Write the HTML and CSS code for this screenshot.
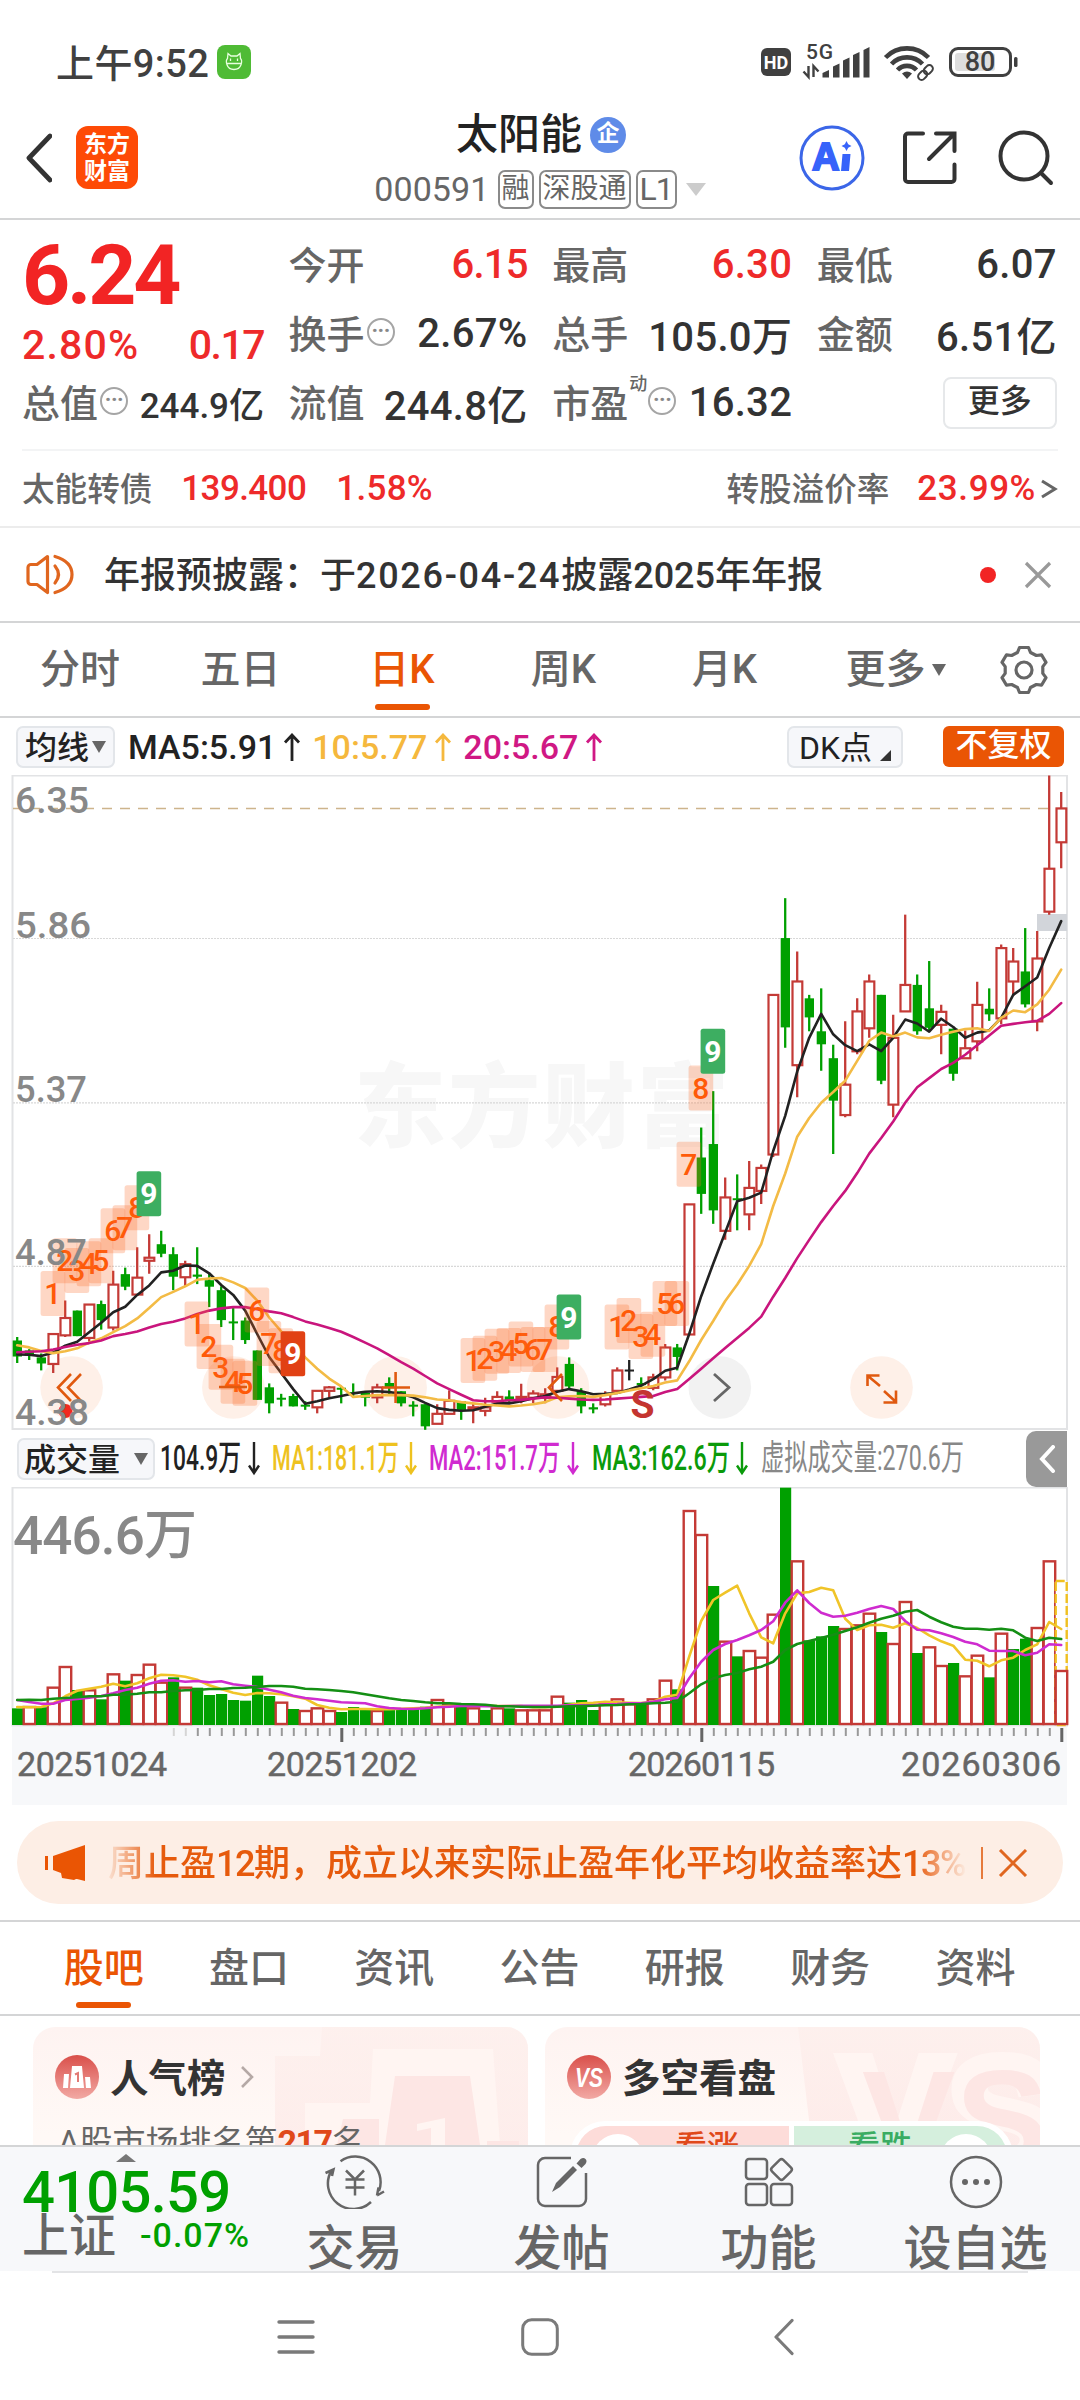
FILE: index.html
```html
<!DOCTYPE html>
<html lang="zh-CN">
<head>
<meta charset="utf-8">
<title>太阳能 000591</title>
<link rel="stylesheet" href="styles.css">
</head>
<body>
<div class="screen">
  <div class="status">
    <span class="clock">上午9:52</span>
    <svg class="app-dot" width="34" height="34" viewBox="0 0 34 34"><rect width="34" height="34" rx="8" fill="#4fbb35"/><g fill="none" stroke="#e9ffe0" stroke-width="1.3"><path d="M10.5 13.5 11 8.500l3 2.500h6l3-2.500.5 5c2 2 1.500 11-6.500 11s-8.500-9-6.500-11zM10 18.500h14"/><path d="M13.500 13.500v2.500M20.500 13.500v2.500"/></g></svg>
    <svg class="signals" width="260" height="50" viewBox="760 38 260 50">
      <rect x="761" y="49" width="30" height="28" rx="6" fill="#404040"/>
      <text x="776" y="69.500" text-anchor="middle" class="t-hd">HD</text>
      <text x="806" y="60" class="t-5g" textLength="27">5G</text>
      <path d="M808.500 67v11l-5-5.500M813.500 78V67l5 5.500" stroke="#404040" stroke-width="2.400" fill="none"/>
      <path d="M822.500 78.500v-4.500l6.500-3v7.500zM833 78.500v-11l6.500-3v14zM843 78.500v-17l6.500-3v20zM853 78.500V56l6.500-3v25.500zM863.500 78.500V51l6-3v30.500z" fill="#404040"/>
      <g fill="none" stroke="#404040" stroke-width="4.600"><path d="M885.500 58.500a30 30 0 0 1 43 0M891.500 65a21.500 21.500 0 0 1 31 0M897.500 71a13 13 0 0 1 19 0"/></g>
      <path d="M902 74.500q5-4 10 0l-5 5.500z" fill="#404040"/>
      <g fill="none" stroke="#fff" stroke-width="5"><path d="M920 79.500l11-11"/></g>
      <g fill="none" stroke="#404040" stroke-width="2" transform="rotate(-45 925.500 73.500)"><rect x="916.500" y="70" width="10" height="7" rx="3.500"/><rect x="924.500" y="70" width="10" height="7" rx="3.500"/></g>
      <rect x="950.500" y="49.500" width="60" height="27" rx="7.500" fill="#fff" stroke="#404040" stroke-width="3"/>
      <rect x="955" y="54" width="40" height="18" rx="3" fill="#dedede"/>
      <rect x="1014" y="58" width="3.500" height="10" rx="1.500" fill="#404040"/>
      <text x="980" y="72" text-anchor="middle" class="t-bat">80</text>
    </svg>
  </div>

  <div class="header">
    <div class="head-left">
      <svg width="28" height="52" viewBox="0 0 28 52"><path d="M26 4 5 26l21 22" fill="none" stroke="#333" stroke-width="4.800" stroke-linecap="round" stroke-linejoin="round"/></svg>
      <div class="logo"><span>东方</span><span>财富</span></div>
    </div>
    <div class="head-mid">
      <div class="name">太阳能<span class="qi">企</span></div>
      <div class="code"><span class="num">000591</span><span class="tag">融</span><span class="tag">深股通</span><span class="tag">L1</span><i class="tri"></i></div>
    </div>
    <div class="head-right">
      <svg width="66" height="66" viewBox="0 0 66 66"><circle cx="33" cy="33" r="31" fill="none" stroke="#3b66e8" stroke-width="3"/><text x="13" y="45" class="t-ai">A</text><path d="M43.500 29h8l-1.500 17h-8zM47.500 16l1.700 3.300 3.300 1.700-3.300 1.700-1.700 3.300-1.700-3.300-3.300-1.700 3.300-1.700z" fill="#3763fa"/></svg>
      <svg width="54" height="54" viewBox="0 0 54 54"><path d="M20 2.500H5a3 3 0 0 0-3 3V48a3 3 0 0 0 3 3h43.500a3 3 0 0 0 3-3V33.500M33 2.500h18.500V20M50.500 3.500 26 28" fill="none" stroke="#333" stroke-width="4" stroke-linecap="round"/></svg>
      <svg width="56" height="56" viewBox="0 0 56 56"><circle cx="26" cy="26" r="23.500" fill="none" stroke="#333" stroke-width="4"/><path d="m43 43 10 10" stroke="#333" stroke-width="4" stroke-linecap="round"/></svg>
    </div>
  </div>

  <div class="quote">
    <div class="now">
      <div class="price">6.24</div>
      <div class="chg"><span class="pct">2.80%</span><span class="diff">0.17</span></div>
    </div>
    <div class="cell"><label>今开</label><b class="up tight">6.15</b></div>
    <div class="cell"><label>最高</label><b class="up">6.30</b></div>
    <div class="cell"><label>最低</label><b>6.07</b></div>
    <div class="cell"><label>换手</label><i class="dots">···</i><b>2.67%</b></div>
    <div class="cell"><label>总手</label><b>105.0万</b></div>
    <div class="cell"><label>金额</label><b>6.51亿</b></div>
    <div class="cell"><label>总值</label><i class="dots">···</i><b class="small">244.9亿</b></div>
    <div class="cell"><label>流值</label><b>244.8亿</b></div>
    <div class="cell"><label>市盈</label><sup>动</sup><i class="dots">···</i><b>16.32</b></div>
    <div class="cell end"><span class="more">更多</span></div>
  </div>
  <div class="bond">
    <span>太能转债</span><b class="b1">139.400</b><b class="b2">1.58%</b>
    <span class="push">转股溢价率</span><b class="b3">23.99%</b>
    <svg width="18" height="22" viewBox="0 0 18 22"><path d="m2 3 13 8-13 8" fill="none" stroke="#666" stroke-width="3"/></svg>
  </div>

  <div class="notice">
    <svg width="48" height="42" viewBox="0 0 48 42"><g fill="none" stroke="#e0661f" stroke-width="3.200" stroke-linejoin="round"><path d="M21.500 2.500 11 10.500H5a3 3 0 0 0-3 3v14a3 3 0 0 0 3 3h6l10.500 8zM29 12q7 8.500 0 17M29 2.500q17 5 17 18t-17 18" stroke-linecap="round"/></g></svg>
    <p>年报预披露：于<em>2026-04-24</em>披露2025年年报</p>
    <i class="dot"></i>
    <svg width="28" height="28" viewBox="0 0 28 28"><path d="m2 2 24 24M26 2 2 26" stroke="#999" stroke-width="3.200"/></svg>
  </div>

  <div class="ktabs">
    <span>分时</span><span>五日</span><span class="on">日K</span><span>周K</span><span>月K</span><span>更多<i class="tri dark"></i></span>
    <svg width="50" height="50" viewBox="-25 -25 50 50"><g fill="none" stroke="#666" stroke-width="3.200" stroke-linejoin="round"><path d="M-4.500-22.500h9L6.500-17.500 12.300-14.500 17.500-15.200 22-7.600 18.800-3.400V3.400L22 7.600 17.500 15.200 12.300 14.500 6.500 17.500 4.500 22.500h-9L-6.500 17.500-12.300 14.500-17.500 15.200-22 7.600-18.800 3.400V-3.400L-22-7.600-17.500-15.200-12.300-14.500-6.500-17.500z"/><circle r="8"/></g></svg>
  </div>

  <div class="malegend">
    <span class="chip"><span>均线</span><i class="tri dark"></i></span>
    <span class="ma k">MA5:5.91<svg width="18" height="28"><use href="#up"/></svg></span>
    <span class="ma y">10:5.77<svg width="18" height="28"><use href="#up"/></svg></span>
    <span class="ma m">20:5.67<svg width="18" height="28"><use href="#up"/></svg></span>
    <span class="chip dk"><span>DK点</span><svg width="11" height="11"><path d="M11 0v11H0z" fill="#333"/></svg></span>
    <span class="fq">不复权</span>
  </div>

  <svg width="0" height="0" class="defs"><defs>
    <path id="up" d="M9 28V2M2 9.500 9 2l7 7.500" fill="none" stroke="currentColor" stroke-width="2.800"/>
    <path id="down" d="M6 0v30M1 23.500 6 31l5-7.500" fill="none" stroke="currentColor" stroke-width="2.400"/>
    <linearGradient id="badge" x1="0" y1="0" x2="0" y2="1"><stop offset="0" stop-color="#d94f4a"/><stop offset="1" stop-color="#f2a9a4"/></linearGradient>
    <linearGradient id="fade" x1="0" y1="0" x2="0" y2="1"><stop offset="0" stop-color="#fdefec"/><stop offset="1" stop-color="#fde8e6"/></linearGradient>
  </defs></svg>

  <svg id="kline" class="panel" width="1080" height="655"></svg>

  <div class="vollegend">
    <span class="chip vol"><span>成交量</span><i class="tri dark"></i></span>
    <svg class="k" width="101" height="42"><text y="32" textLength="81" lengthAdjust="spacingAndGlyphs">104.9万</text><use href="#down" x="88" y="4"/></svg>
    <svg class="y" width="146" height="42"><text y="32" textLength="127" lengthAdjust="spacingAndGlyphs">MA1:181.1万</text><use href="#down" x="133" y="4"/></svg>
    <svg class="m" width="152" height="42"><text y="32" textLength="131" lengthAdjust="spacingAndGlyphs">MA2:151.7万</text><use href="#down" x="138" y="4"/></svg>
    <svg class="g" width="158" height="42"><text y="32" textLength="138" lengthAdjust="spacingAndGlyphs">MA3:162.6万</text><use href="#down" x="144" y="4"/></svg>
    <svg class="n" width="204" height="42"><text y="32" textLength="203" lengthAdjust="spacingAndGlyphs">虚拟成交量:270.6万</text></svg>
    <span class="pull"><svg width="18" height="28"><path d="M15 2 4 14l11 12" fill="none" stroke="#fff" stroke-width="4" stroke-linecap="round"/></svg></span>
  </div>

  <svg id="volume" class="panel" width="1080" height="318"></svg>

  <div class="banner">
    <svg width="42" height="36" viewBox="0 0 42 36"><path d="M1 11h3v14H1zM9 11 41 0v36l-8-2-1 0-2 1-12-2-1-5-8-3z" fill="#ea5504"/></svg>
    <p>周止盈<em>12</em>期，成立以来实际止盈年化平均收益率达<em>13%</em></p>
    <i class="bar"></i>
    <svg width="30" height="28" viewBox="0 0 30 28"><path d="m2 1 26 26M28 1 2 27" stroke="#e0661f" stroke-width="3"/></svg>
  </div>

  <div class="itabs">
    <span class="on">股吧</span><span>盘口</span><span>资讯</span><span>公告</span><span>研报</span><span>财务</span><span>资料</span>
  </div>

  <div class="cards">
    <div class="card">
      <svg class="ghost" width="495" height="118" viewBox="33 2027 495 118"><path d="M322 2027H528v118H275v-89h45z" fill="url(#fade)" opacity=".7"/><path d="M373 2049H493l7 96H305v-42h65z" fill="#fff5f2"/><path d="M395 2076h75l10 69h-95zM343 2119h36v26h-42zM487 2141h32v4h-32z" fill="#fde6e4"/><path d="m417 2124 28-6v27h-14v-17l-14 3z" fill="#fff5f2"/></svg>
      <div class="card-h"><svg width="44" height="44" viewBox="0 0 44 44"><circle cx="22" cy="22" r="22" fill="url(#badge)"/><path d="M9 19h5l-1 14H8zM17 11h10l2 22H15zM30 22h5l1 11h-5z" fill="#fff"/><path d="m20 19.500 3-1.500v9" stroke="#e27a75" stroke-width="2" fill="none"/></svg><h3>人气榜</h3><svg width="14" height="24" viewBox="0 0 14 24"><path d="m2 2 10 10L2 22" fill="none" stroke="#b5a9a6" stroke-width="2.600"/></svg></div>
      <p>A股市场排名第<b>217</b>名</p>
    </div>
    <div class="card">
      <svg class="ghost" width="495" height="118" viewBox="545 2027 495 118"><path d="M798 2027h242v118H812z" fill="url(#fade)" opacity=".8"/><text x="842" y="2170" class="t-vs1">VS</text><text x="862" y="2168" class="t-vs2">VS</text></svg>
      <div class="card-h"><svg width="44" height="44" viewBox="0 0 44 44"><circle cx="22" cy="22" r="22" fill="url(#badge)"/><text x="22" y="32" class="t-vs" text-anchor="middle" textLength="28" lengthAdjust="spacingAndGlyphs">VS</text></svg><h3>多空看盘</h3></div>
      <div class="pill"><span class="bull"><i></i>看涨</span><span class="bear">看跌<i></i></span></div>
    </div>
  </div>

  <div class="dock">
    <div class="index">
      <i class="tri up-tri"></i>
      <div class="pts">4105.59</div>
      <div class="sub"><span>上证</span><b>-0.07%</b></div>
    </div>
    <div class="act"><svg width="60" height="54" viewBox="-30 -27 60 54"><g fill="none" stroke="#666" stroke-width="2.500"><path d="M-14.500-20.800A25.500 25.500 0 0 1 24 9M22 13.500l7-4M22 13.500l1.500-8M16 20A25.500 25.500 0 0 1-23.500-11.500M-29.500-9l8-3.500-1.500 6.500"/><path d="M-9-11.500 0-2.500l9-9M-9.500-2.500h19M-9.500 5.500h19M0-2.500v16"/></g></svg><span>交易</span></div>
    <div class="act"><svg width="60" height="54" viewBox="-30 -27 60 54"><path d="M9-24h-26a7 7 0 0 0-7 7v34a7 7 0 0 0 7 7h34a7 7 0 0 0 7-7V-9" fill="none" stroke="#666" stroke-width="2.500"/><path d="m-10 10 4-9 17-17 4 4-17 17zM14.500-18.500l4-4.500q3-2 5 0t0 5l-4 4z" fill="#666"/></svg><span>发帖</span></div>
    <div class="act"><svg width="60" height="54" viewBox="-30 -27 60 54"><g fill="none" stroke="#666" stroke-width="2.500"><rect x="-23" y="-23" width="21" height="20" rx="3"/><rect x="-23" y="2" width="21" height="21" rx="3"/><rect x="2" y="2" width="21" height="21" rx="3"/><rect x="4.500" y="-20.500" width="16" height="16" rx="2.500" transform="rotate(45 12.500 -12.500)"/></g></svg><span>功能</span></div>
    <div class="act"><svg width="60" height="54" viewBox="-30 -27 60 54"><circle r="25" fill="none" stroke="#666" stroke-width="2.500"/><g fill="#666"><circle cx="-11" r="3"/><circle r="3"/><circle cx="11" r="3"/></g></svg><span>设自选</span></div>
  </div>

  <div class="nav">
    <svg width="38" height="38" viewBox="0 0 38 38"><path d="M2 4h34M2 19h34M2 34h34" stroke="#7a7a7a" stroke-width="3.400" stroke-linecap="round"/></svg>
    <svg width="38" height="38" viewBox="0 0 38 38"><rect x="1.700" y="1.700" width="34.600" height="34.600" rx="9" fill="none" stroke="#7a7a7a" stroke-width="3"/></svg>
    <svg width="20" height="38" viewBox="0 0 20 38"><path d="M18 2.500 2 19l16 16.500" fill="none" stroke="#7a7a7a" stroke-width="3.200" stroke-linecap="round" stroke-linejoin="round"/></svg>
  </div>
</div>
<script src="chart.js"></script>
</body>
</html>
```
FILE: styles.css
```css
* { box-sizing: border-box; margin: 0; padding: 0; }
body {
  width: 1080px;
  background: #fff;
  color: #333;
  font-family: Roboto, "Noto Sans CJK SC", sans-serif;
  font-weight: 500;
}
svg { display: block; flex: none; }
i, em { font-style: normal; }
b { font-weight: 500; }
.screen { width: 1080px; height: 2400px; overflow: hidden; background: #fff; }

.tri { display: inline-block; width: 0; height: 0; border: solid transparent; border-width: 13px 10px 0; border-top-color: #ccc; }
.tri.dark { border-width: 12px 7px 0; border-top-color: #666; }
.up { color: #ee2a2a; }

/* status bar */
.status { height: 110px; display: flex; align-items: center; padding: 14px 60px 0 56px; }
.clock { font-size: 38px; color: #404040; letter-spacing: .4px; width: 161px; white-space: nowrap; margin-top: -3px; }
.signals { margin-left: auto; }
.t-hd { font: 700 18px Roboto; fill: #fff; }
.t-5g { font: 500 21px Roboto; fill: #404040; }
.t-bat { font: 500 27px Roboto; fill: #404040; }

/* title bar */
.header { height: 110px; display: grid; grid-template-columns: 1fr auto 1fr; border-bottom: 2px solid #d4d5d6; }
.head-left { display: flex; align-items: center; padding: 0 0 13px 24px; gap: 24px; }
.logo { width: 62px; height: 63px; border-radius: 12px; background: #fe4a06; color: #fff; display: flex; flex-direction: column; align-items: center; justify-content: center; font-size: 23px; font-weight: 700; line-height: 27px; }
.head-mid { display: flex; flex-direction: column; align-items: center; }
.name { font-size: 42px; line-height: 50px; height: 50px; color: #222; display: flex; align-items: center; margin-left: 2px; }
.qi { width: 36px; height: 36px; border-radius: 50%; background: #5f8be8; color: #fff; font-size: 23px; line-height: 34px; text-align: center; font-weight: 700; margin-left: 8px; }
.code { display: flex; align-items: center; height: 40px; margin-top: 9px; color: #666; font-size: 34px; }
.code .num { font-weight: 400; letter-spacing: .1px; margin-right: 8px; }
.tag { border: 2px solid #8a8a8a; border-radius: 7px; height: 39px; line-height: 34px; padding: 0 2px; font-size: 28px; font-weight: 400; margin-right: 5px; }
.tag:last-of-type { font-size: 32px; letter-spacing: -1px; }
.code .tri { margin-left: 4px; }
.head-right { display: flex; align-items: center; justify-content: flex-end; padding: 0 26px 13px 0; gap: 38px; }
.head-right svg:last-child { margin-left: 3px; }
.t-ai { font: 700 38px "Liberation Sans"; fill: #3763fa; stroke: #3763fa; stroke-width: 2; }

/* quote grid */
.quote { display: grid; grid-template-columns: 242px 239px 240px 240px; column-gap: 24.600px; grid-template-rows: 69px 69px 69px; padding: 10px 21px 0 22px; height: 229px; }
.now { grid-row: 1 / 3; color: #ee2a2a; }
.price { font-size: 84px; font-weight: 700; line-height: 92px; letter-spacing: -3.200px; color: #f22424; }
.chg { display: flex; justify-content: space-between; font-size: 41px; line-height: 46px; }
.pct { letter-spacing: 1.200px; }
.diff { letter-spacing: -1.500px; }
.cell { display: flex; align-items: center; white-space: nowrap; }
.cell label { font-size: 38px; color: #666; margin-top: -4px; }
.cell b { margin-left: auto; font-size: 40px; letter-spacing: .3px; }
.cell .tight { letter-spacing: -.8px; }
.cell .small { font-size: 35px; letter-spacing: 0; }
.cell sup { font-size: 18px; color: #666; align-self: flex-start; line-height: 24px; margin: 4px -1px 0 1px; }
.dots { width: 28px; height: 28px; border: 2px solid #a5a5a5; border-radius: 50%; color: #888; font-size: 22px; line-height: 22px; text-align: center; font-weight: 700; margin: -3px 0 0 2px; letter-spacing: -.5px; }
.end { justify-content: flex-end; }
.more { width: 114px; height: 52px; border: 2px solid #e6e8ea; border-radius: 8px; text-align: center; line-height: 44px; font-size: 32px; }
.bond { height: 77px; margin: 0 22px; border-top: 2px solid #f3f4f5; display: flex; align-items: center; font-size: 32.600px; color: #666; }
.bond span { margin-top: -5px; }
.bond b { font-size: 35px; color: #ee2a2a; margin-top: -1px; }
.bond .b1 { margin-left: 29px; letter-spacing: -.6px; }
.bond .b2 { margin-left: 30px; letter-spacing: .3px; }
.bond .b3 { margin-left: 28px; letter-spacing: .6px; }
.bond .push { margin-left: auto; }
.bond svg { margin-left: 4px; }

/* notice */
.notice { height: 97px; border-top: 2px solid #ececec; border-bottom: 2px solid #d4d5d6; display: flex; align-items: center; padding: 0 28px 0 26px; }
.notice p { font-size: 36px; margin: -6px 0 0 30px; white-space: nowrap; flex: 1; }
.notice em { letter-spacing: 1.700px; }
.dot { width: 16px; height: 16px; border-radius: 50%; background: #f22424; margin-right: 28px; }

/* period tabs */
.ktabs { height: 95px; border-bottom: 2px solid #d4d5d6; display: grid; grid-template-columns: 160px 161px 162px 161px 161px 181px 79px; font-size: 40px; color: #666; align-items: center; justify-items: center; }
.ktabs span { position: relative; display: flex; align-items: center; height: 93px; line-height: 92px; }
.ktabs .tri { margin-left: 6px; }
.ktabs svg { margin-left: -4px; }
.on { color: #ea5504; }
.on::after { content: ""; position: absolute; left: 50%; bottom: 6px; width: 55px; height: 6px; margin-left: -27.500px; border-radius: 3px; background: #ea5504; }

/* chart legends */
.chip { border: 2px solid #e3e6ea; border-radius: 7px; background: #f6f7fa; height: 42px; display: flex; align-items: center; justify-content: center; color: #222; }
.chip span { margin-top: -4px; }
.malegend { height: 57px; display: flex; align-items: center; padding: 0 16px; font-size: 34px; }
.malegend .chip { width: 99px; font-size: 32px; gap: 3px; margin-right: 13px; }
.malegend .chip.dk { width: 116px; margin: 0 40px 0 auto; gap: 8px; font-size: 32px; font-weight: 400; }
.dk svg { margin-top: 18px; }
.ma { display: flex; align-items: center; gap: 7px; margin-right: 11px; }
.k { color: #222; } .y { color: #f5b83d; } .m { color: #d01884; } .g { color: #0a9a0a; } .n { color: #888; }
.fq { background: #ea5504; color: #fff; width: 121px; height: 41px; line-height: 38px; border-radius: 6px; font-size: 32px; text-align: center; }
.vollegend { height: 57px; display: flex; align-items: center; padding-left: 17px; }
.vollegend > svg text { font-size: 35px; fill: currentColor; }
.vollegend .chip.vol { width: 138px; font-size: 32px; gap: 14px; margin-right: 5px; flex: none; }
.vollegend > svg { margin-right: 11px; }
.vollegend .y { color: #eec21f; } .vollegend .m { color: #d02bd0; } .vollegend .n { font-weight: 400; }
.pull { margin-left: auto; margin-right: 13px; width: 41px; height: 56px; border-radius: 10px 0 0 10px; background: #999; display: flex; align-items: center; justify-content: center; }
.panel { overflow: hidden; }
.t-price { font: 500 37px Roboto, sans-serif; fill: #888; }
.t-max { font: 500 53px Roboto, "Noto Sans CJK SC", sans-serif; fill: #888; }
.t-date { font: 400 34px Roboto, sans-serif; fill: #666; stroke: #666; stroke-width: .5; }
.t-mark { font: 500 30px Roboto, sans-serif; fill: #ff5a08; text-anchor: middle; }
.t-mark.inv { fill: #fff; font-weight: 700; }
.t-s { font: 700 39px Roboto, sans-serif; fill: #c43530; text-anchor: middle; }
.t-water { font: 900 92px "Noto Sans CJK SC", sans-serif; fill: #f7f7f7; }

/* banner */
.banner { margin: 16px 17px; height: 83px; border-radius: 42px; background: #fdeee5; display: flex; align-items: center; padding: 0 35px 0 27px; color: #e65a0c; }
.banner p { font-size: 36px; margin: -5px 0 0 18px; padding-left: 4px; width: 864px; white-space: nowrap; overflow: hidden; -webkit-mask-image: linear-gradient(90deg, transparent 0, #000 6%, #000 94%, transparent 100%); mask-image: linear-gradient(90deg, transparent 0, #000 6%, #000 94%, transparent 100%); }
.banner em { letter-spacing: -1.500px; }
.bar { width: 2px; height: 32px; background: #e67a3c; margin: 0 15px 0 14px; }
.banner svg:last-child { margin-left: auto; }

.itabs { height: 96px; border-top: 2px solid #d4d5d6; border-bottom: 2px solid #d4d5d6; display: grid; grid-template-columns: repeat(7, 145.300px); padding-left: 31px; justify-items: center; font-size: 40px; color: #666; }
.itabs span { position: relative; line-height: 94px; height: 92px; }

/* cards */
.cards { height: 129px; overflow: hidden; padding: 11px 0 0 33px; display: flex; gap: 17px; }
.card { position: relative; width: 495px; height: 180px; border-radius: 22px; background: linear-gradient(#fef3f1, #fff9f6 60%); overflow: hidden; flex: none; }
.ghost { position: absolute; inset: 0; }
.card-h { position: relative; display: flex; align-items: center; height: 56px; margin: 22px 0 0 22px; }
.card-h h3 { font-size: 38.500px; font-weight: 700; margin: -5px 14px 0 11px; }
.card p { position: relative; font-size: 33px; line-height: 44px; margin: 15px 0 0 25px; color: #666; white-space: nowrap; font-weight: 400; }
.card p b { color: #e0491a; font-weight: 700; font-size: 34px; letter-spacing: -1.500px; }
.pill { position: relative; display: flex; gap: 5px; margin: 16px 27px 0 25px; padding: 5px 6px; height: 70px; border-radius: 35px; background: #fff; font-size: 32px; line-height: 42px; }
.pill span { display: flex; height: 60px; width: 214px; }
.bull { background: #fddcd9; color: #e0491a; border-radius: 30px 0 0 30px; padding-left: 16px; gap: 31px; }
.bear { background: #d5efdd; color: #3aac62; border-radius: 0 30px 30px 0; padding-left: 54px; gap: 28px; }
.pill i { width: 52px; height: 52px; border-radius: 50%; background: #fff; margin-top: 8px; flex: none; }
.t-vs { font: italic 700 28px "Liberation Sans"; fill: #fff; }
.t-vs1 { font: 700 160px "Liberation Sans"; fill: #fff5f2; stroke: #fff5f2; stroke-width: 14; }
.t-vs2 { font: 700 140px "Liberation Sans"; fill: #fde6e4; }

/* bottom dock */
.dock { height: 126px; background: #f7f8fa; border-top: 2px solid #d4d5d6; display: grid; grid-template-columns: 251px 207px 207px 207px 207px; overflow: hidden; }
.index { padding-left: 22px; color: #00a000; white-space: nowrap; }
.up-tri { display: block; border-width: 0 10px 8px; border-bottom-color: #777; margin: 7px 0 0 94px; }
.pts { font-size: 58px; line-height: 60px; height: 49px; letter-spacing: -.8px; }
.sub { display: flex; align-items: center; height: 50px; }
.sub span { font-size: 47px; color: #666; margin-top: -9px; }
.sub b { margin-left: 24px; font-size: 34px; letter-spacing: 1px; margin-top: -2px; }
.act { display: flex; flex-direction: column; align-items: center; padding-top: 8px; color: #666; font-size: 48px; line-height: 70px; white-space: nowrap; }
.act span { margin-top: 5px; }
.nav { height: 130px; margin: 0 52px; border-top: 2px solid #e3e4e6; display: flex; align-items: center; padding-left: 225px; }
.nav svg:nth-child(2) { margin-left: 206px; }
.nav svg:nth-child(3) { margin-left: 215px; }
```
FILE: chart.js
```js
const STEP = 12;
const X = i => 17.2 + STEP * i;
const RED = '#c43a36', GREEN = '#00a000';

// [kind, body top, body bottom, high, low] in chart units
const candles = [
['g',1315,1352,1307,1367],['g',1338,1350,1335,1360],['g',1354,1368,1345,1384],['r',1299,1368,1299,1390],['r',1262,1302,1223,1307],['g',1246,1305,1246,1305],['r',1231,1308,1231,1318],['g',1231,1268,1223,1290],
['r',1185,1284,1154,1292],['g',1162,1191,1147,1199],['r',1169,1208,1100,1210],['r',1123,1130,1070,1161],['g',1093,1115,1062,1123],['g',1116,1168,1100,1199],['r',1138,1168,1131,1190],['g',1163,1168,1100,1185],
['g',1176,1191,1160,1238],['g',1199,1268,1190,1284],['g',1271,1275,1238,1314],['g',1269,1314,1262,1323],['g',1338,1452,1338,1452],['g',1423,1460,1414,1483],['g',1447,1451,1438,1467],['g',1443,1467,1438,1467],
['g',1463,1467,1455,1475],['r',1430,1468,1430,1483],['r',1422,1430,1420,1447],['g',1424,1428,1422,1460],['g',1434,1438,1414,1445],['g',1436,1447,1432,1467],['r',1422,1445,1415,1460],['g',1413,1425,1400,1440],
['g',1432,1460,1432,1467],['g',1463,1467,1455,1490],['g',1462,1513,1462,1521],['r',1483,1506,1462,1506],['r',1453,1483,1430,1483],['g',1455,1475,1455,1498],['r',1468,1472,1460,1506],['r',1468,1476,1447,1490],
['r',1444,1455,1432,1460],['g',1444,1455,1430,1460],['r',1444,1447,1415,1460],['r',1436,1446,1430,1460],['r',1438,1446,1425,1460],['r',1398,1430,1377,1430],['g',1369,1421,1354,1425],['g',1432,1467,1425,1483],
['g',1469,1474,1460,1483],['r',1438,1461,1432,1467],['r',1383,1430,1377,1430],['k',1382,1385,1360,1407],['g',1413,1418,1400,1425],['r',1399,1423,1392,1430],['r',1330,1399,1323,1407],['g',1331,1353,1323,1384],
['r',1000,1300,1000,1300],['g',893,977,824,1023],['g',862,1015,740,1046],['r',984,1061,939,1083],['g',987,991,932,1061],['r',962,1023,901,1061],['r',916,969,909,1000],['r',517,885,517,892],
['g',387,593,295,640],['r',486,679,418,754],['g',526,570,518,602],['g',602,632,503,693],['g',664,762,633,885],['r',724,794,579,800],['r',555,647,526,655],['r',486,594,471,617],
['g',518,716,518,724],['r',616,770,564,800],['r',494,555,333,555],['g',495,602,471,610],['g',549,594,440,602],['r',556,586,541,655],['g',596,700,596,716],['r',640,663,600,665],
['r',540,624,488,648],['g',550,563,503,578],['r',409,571,402,586],['r',440,486,410,520],['g',464,540,364,547],['r',433,578,371,602],['r',226,325,12,333],['r',87,165,50,226]];

const ma5 = [1347,1348,1351,1343,1327,1318,1296,1274,1250,1237,1210,1188,1158,1154,1142,1143,1160,1187,1210,1246,1300,1353,1390,1427,1461,1455,1448,1443,1437,1433,1432,1434,1438,1446,1459,1471,1475,1477,1476,1468,1460,1460,1455,1448,1443,1433,1427,1432,1439,1438,1436,1428,1419,1404,1385,1378,1300,1213,1138,1066,994,986,974,878,797,695,617,562,609,634,648,632,648,617,575,584,603,573,592,617,605,600,571,518,498,478,410,348];
const ma10 = [1326,1331,1339,1344,1340,1333,1320,1310,1296,1282,1264,1240,1215,1203,1190,1175,1172,1171,1181,1194,1223,1262,1294,1323,1354,1380,1403,1421,1445,1443,1441,1441,1441,1442,1446,1451,1453,1457,1460,1463,1465,1467,1465,1462,1457,1446,1444,1443,1445,1441,1436,1430,1425,1420,1412,1407,1363,1314,1270,1224,1186,1143,1093,1005,930,845,802,767,742,716,670,624,605,614,605,616,618,610,603,597,595,601,571,554,558,540,506,460];
const ma20 = [1342,1341,1340,1336,1330,1325,1321,1315,1305,1300,1294,1285,1277,1272,1264,1254,1246,1241,1238,1238,1243,1248,1252,1261,1271,1278,1286,1295,1307,1320,1333,1349,1365,1380,1397,1414,1427,1440,1453,1455,1455,1453,1452,1449,1446,1447,1449,1451,1452,1451,1449,1447,1445,1443,1434,1427,1404,1380,1356,1332,1309,1286,1260,1214,1171,1125,1083,1042,1005,970,929,884,848,810,767,731,710,689,675,656,634,612,589,585,581,578,562,537];

// [digit, column, top, kind]
const marks = [
[1,3,1155],[2,4,1079],[3,5,1102],[4,6,1086],[5,7,1079],[6,8,1010],[7,9,1003],[8,10,957],[9,11,925,'g'],
[1,15,1225],[2,16,1277],[3,17,1325],[4,18,1357],[5,19,1362],[6,20,1193],[7,21,1270],[8,22,1287],[9,23,1294,'r'],
[1,38,1309],[2,39,1304],[3,40,1288],[4,41,1286],[5,42,1271],[6,43,1284],[7,44,1284],[8,45,1232],[9,46,1209,'g'],
[1,50,1232],[2,51,1217],[3,52,1254],[4,53,1249],[5,54,1178],[6,55,1178],[7,56,857],[8,57,681],[9,58,596,'g']];

const path = (pts, y, color, w) =>
  `<path d="M${pts.map((v, i) => X(i).toFixed(1) + ' ' + y(v).toFixed(1)).join('L')}" fill="none" stroke="${color}" stroke-width="${w}" stroke-linejoin="round" stroke-linecap="round"/>`;

function drawKline() {
  const y = v => (v - 11) / 2.306;
  let s = '<rect x="12.500" y=".500" width="1054.500" height="653.500" fill="#fff" stroke="#e2e3e5" stroke-width="2"/>';
  s += '<text x="354" y="365" class="t-water" textLength="375">东方财富</text>';
  for (const g of [388, 767, 1144]) s += `<path d="M13 ${y(g)}H1067" stroke="#d8d8d8" stroke-width="1.200" stroke-dasharray="2 1"/>`;
  s += `<path d="M13 ${y(88)}H1067" stroke="#cdb48c" stroke-width="1.500" stroke-dasharray="10 8" stroke-dashoffset="1"/>`;
  for (const cx of [71.6, 233.4, 395.6, 558, 719.8, 881.5])
    s += `<circle cx="${cx}" cy="612.500" r="31.300" fill="${cx === 719.8 ? '#f2f2f2' : '#fef0e8'}"/>`;
  s += '<rect x="1037" y="139" width="30" height="17" fill="#d2d5da"/>';
  candles.forEach(([k, t, b, h, l], i) => {
    const x = X(i), c = k === 'r' ? RED : k === 'g' ? GREEN : '#222';
    const top = y(t), bh = Math.max(y(b) - top, 2);
    if (k === 'r') {
      s += `<path d="M${x} ${y(h)}V${top}M${x} ${y(b)}V${y(l)}" stroke="${c}" stroke-width="2.300"/>`;
      s += `<rect x="${x - 4.7}" y="${top + .5}" width="9.800" height="${bh}" fill="#fff" stroke="${c}" stroke-width="2.200"/>`;
    } else {
      s += `<path d="M${x} ${y(h)}V${y(l)}" stroke="${c}" stroke-width="2.300"/><rect x="${x - 4.5}" y="${top}" width="9.300" height="${bh}" fill="${c}"/>`;
    }
  });
  s += path(ma5, y, '#222', 2.6) + path(ma10, y, '#f3bb45', 2.6) + path(ma20, y, '#c9157d', 2.6);
  for (const [n, i, t, k] of marks) {
    const x = X(i) - .3, top = y(t);
    const fill = k === 'g' ? '#3dae61' : k === 'r' ? '#e14114' : '#fb6d2a';
    s += `<rect x="${x - 12.3}" y="${top}" width="24.600" height="45" rx="2.500" fill="${fill}" ${k ? '' : 'opacity=".27"'}/>`;
    s += `<text x="${x}" y="${top + 33}" class="t-mark${k ? ' inv' : ''}">${n}</text>`;
  }
  s += '<text x="642.600" y="643" class="t-s">S</text>';
  s += '<g fill="none" stroke="#e0590f" stroke-width="2.600"><path d="M71 599 58 612.500 71 626M81 599 68 612.500 81 626M219 612h28M395.600 597v31M382 612.500h28M562 599 549 612.500 562 626"/><path d="M867.500 611v-10.500h12M868 601l12 10M896 615.500v12H883.500M896 627l-12-11"/></g>';
  s += '<path d="M714 599 729 612.500 714 626" fill="none" stroke="#666" stroke-width="2.800"/>';
  s += '<circle cx="65.500" cy="636" r="7" fill="#f22a1e"/>';
  [['6.35', 38, 73], ['5.86', 163, 75], ['5.37', 327, 71], ['4.87', 489.5, 71], ['4.38', 650, 73]].forEach(([t, ty, w]) => {
    s += `<text x="15" y="${ty}" class="t-price" textLength="${w + 1}" lengthAdjust="spacingAndGlyphs">${t}</text>`;
  });
  document.getElementById('kline').innerHTML = s;
}

const volTop = [865,858,862,800,738,810,808,838,760,782,762,731,785,772,800,803,825,822,840,842,767,828,845,867,870,862,870,876,861,867,870,867,867,867,860,837,850,858,862,870,862,865,868,868,868,827,848,840,870,845,835,850,850,835,779,808,270,342,498,662,709,690,710,581,203,421,661,649,618,624,613,578,636,669,543,699,679,735,729,766,704,772,638,687,656,621,421,750];
const red = new Set([1,3,4,6,8,10,11,12,14,22,24,25,26,30,35,36,38,40,42,43,44,45,49,50,51,53,54,56,57,59,61,62,63,65,69,70,71,73,74,76,77,79,80,82,85,86,87]);
const vma1 = [861,862,861,850,829,812,806,800,791,799,790,775,764,766,770,779,796,807,818,825,819,820,823,829,836,855,863,868,867,867,868,868,866,865,863,860,857,855,856,857,858,858,858,862,862,860,854,850,848,845,847,848,849,845,830,824,710,603,540,518,497,580,652,670,580,520,516,503,511,596,630,616,614,623,610,624,646,664,677,719,722,739,721,713,690,673,606,627];
const vma2 = [840,846,851,851,840,837,833,828,820,810,803,791,782,781,785,783,787,784,793,797,801,809,817,827,834,838,842,847,848,850,859,864,866,867,865,862,860,858,858,859,859,858,857,857,857,857,856,856,856,853,852,850,850,845,838,834,775,725,690,672,660,646,630,604,548,511,549,578,590,587,578,567,558,567,603,629,631,640,651,665,673,692,693,693,706,698,673,675];
const vma3 = [840,839,840,836,834,832,829,829,824,824,821,817,817,813,811,810,807,807,804,803,801,798,798,800,806,808,810,813,817,823,829,835,840,843,847,850,850,852,853,854,858,859,860,861,861,860,859,858,857,856,855,853,852,850,848,845,820,793,775,765,759,748,740,725,690,672,663,654,644,633,622,608,596,587,575,570,590,607,620,626,626,629,626,631,653,663,653,657];

function drawVolume() {
  const y = v => v / 3 - 67, base = 238;
  let s = '<rect x="12.500" y=".500" width="1054.500" height="238" fill="#fff" stroke="#e2e3e5" stroke-width="2"/>';
  s += '<rect x="12" y="240" width="1055" height="78" fill="#f7f8fa"/>';
  s += '<text x="13" y="67" class="t-max" textLength="184">446.6万</text>';
  volTop.forEach((v, i) => {
    const x = X(i), t = y(v);
    if (i === 87) s += `<rect x="${x - 5.5}" y="${y(483)}" width="11" height="${base - y(483)}" fill="#fff" stroke="#f0c020" stroke-width="2.400" stroke-dasharray="9 3"/>`;
    if (red.has(i))
      s += `<rect x="${x - 5.5}" y="${t + 1}" width="11.500" height="${base - t - 2}" fill="#fff" stroke="${RED}" stroke-width="2.400"/>`;
    else s += `<rect x="${x - 5.2}" y="${t}" width="11.200" height="${base - t}" fill="${GREEN}"/>`;
  });
  s += path(vma1, y, '#f0c428', 2.6) + path(vma2, y, '#cf2bcf', 2.6) + path(vma3, y, '#148f14', 2.6);
  for (let i = 13; i < 88; i++) {
    const major = i === 27 || i === 57 || i === 87;
    const x = X(i) + .6;
    s += `<path d="M${x} 241v${major ? 14 : 8}" stroke="${major ? '#666' : i < 15 ? '#d5d5d5' : '#999'}" stroke-width="${major ? 3 : 2}"/>`;
  }
  [['20251024', 17, 150], ['20251202', 267, 150], ['20260115', 628, 147], ['20260306', 901, 160]].forEach(([t, x, w]) => {
    s += `<text x="${x}" y="288.500" class="t-date" textLength="${w}">${t}</text>`;
  });
  document.getElementById('volume').innerHTML = s;
}

drawKline();
drawVolume();
```
